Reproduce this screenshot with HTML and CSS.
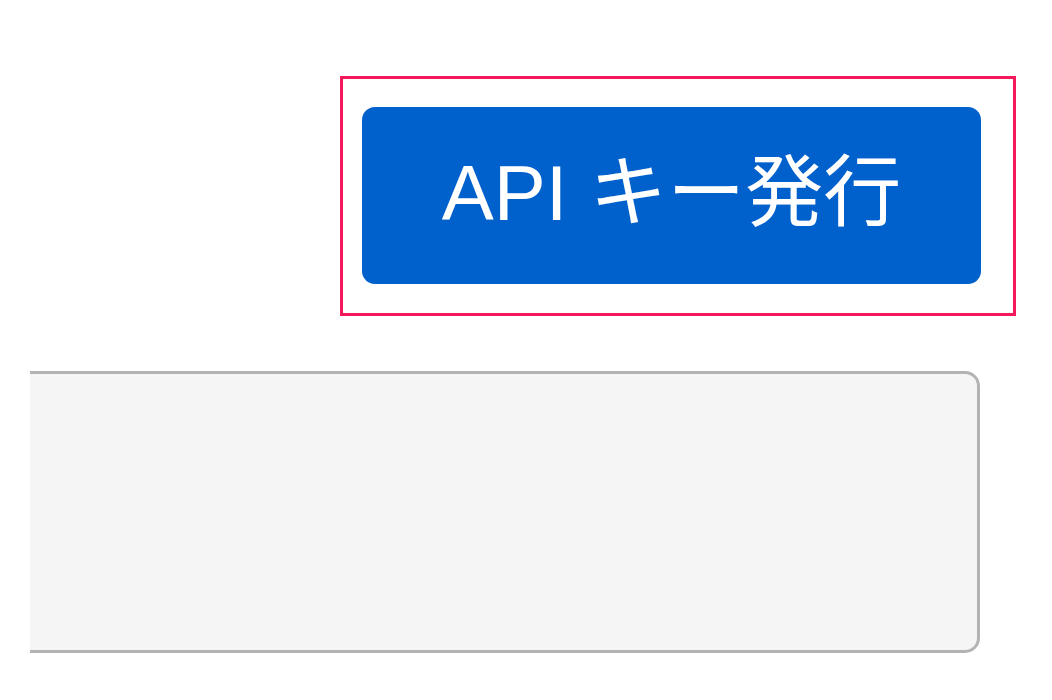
FILE: index.html
```html
<!DOCTYPE html>
<html lang="ja">
<head>
<meta charset="utf-8">
<title>API キー発行</title>
<link rel="stylesheet" href="styles.css">
</head>
<body>
<div class="page">
  <div class="top-row">
    <div class="highlight">
      <button class="btn-primary" type="button">API キー発行</button>
    </div>
  </div>
  <div class="panel"></div>
</div>
</body>
</html>
```

FILE: styles.css
```css
html, body {
  margin: 0;
  padding: 0;
  background: #ffffff;
  width: 1052px;
  height: 700px;
  overflow: hidden;
}

.page {
  display: flex;
  flex-direction: column;
  padding-top: 76px;
}

.top-row {
  display: flex;
  padding-left: 340px;
}

.highlight {
  box-sizing: border-box;
  width: 676px;
  height: 240px;
  border: 3px solid #f5195b;
  padding: 28px 0 0 19px;
}

.btn-primary {
  box-sizing: border-box;
  width: 619px;
  height: 177px;
  margin: 0;
  border: none;
  border-radius: 13px;
  background: #0060cc;
  color: #ffffff;
  font-family: "Liberation Sans", "Noto Sans CJK JP", sans-serif;
  font-size: 78px;
  line-height: 1;
  padding: 0 0 6px 0;
  display: flex;
  align-items: center;
  justify-content: center;
  cursor: pointer;
}

.panel {
  box-sizing: border-box;
  margin-top: 55px;
  margin-left: 30px;
  width: 950px;
  height: 282px;
  background: #f5f5f5;
  border: 3px solid #b3b3b3;
  border-left: none;
  border-radius: 0 15px 15px 0;
}
```
